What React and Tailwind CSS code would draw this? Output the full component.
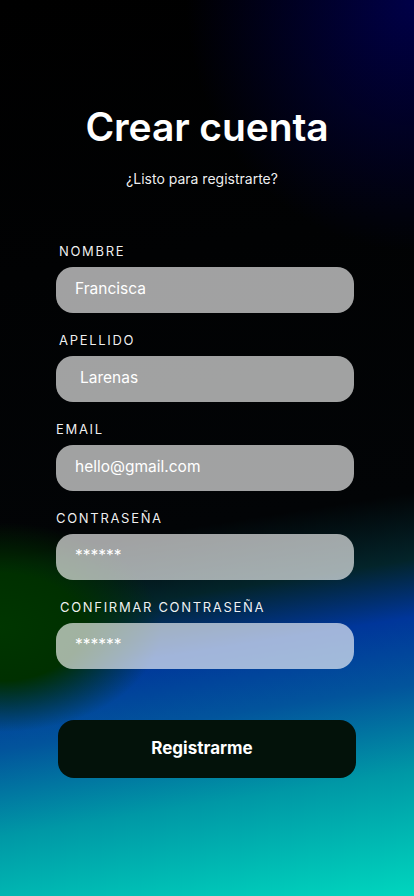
export default function App() {
  const fields = [
    { label: "NOMBRE", value: "Francisca", labelPad: "pl-[3px]", valuePad: "pl-[19px]" },
    { label: "APELLIDO", value: "Larenas", labelPad: "pl-[3px]", valuePad: "pl-[24px]" },
    { label: "EMAIL", value: "hello@gmail.com", labelPad: "pl-0", valuePad: "pl-[19px]" },
    { label: "CONTRASEÑA", value: "******", labelPad: "pl-0", valuePad: "pl-[19px]" },
    { label: "CONFIRMAR CONTRASEÑA", value: "******", labelPad: "pl-[4px]", valuePad: "pl-[19px]" },
  ];

  return (
    <div
      className="
      relative
      min-h-[896px]
      w-full
      overflow-hidden
      bg-[radial-gradient(ellipse_55%_28%_at_100%_0%,#000048_0%,transparent_100%),radial-gradient(ellipse_50%_15%_at_0%_70%,#003600_0%,#003000_40%,transparent_78%),linear-gradient(171deg,#000000_0%,#020406_58%,#03242a_65%,#00369a_71%,#02549c_78%,#0098a6_87%,#00d6be_100%)]
      font-['Inter','Noto_Sans',sans-serif]
      text-white
    "
    >
      {/* Header */}

      <div className="flex flex-col items-center pt-[103px]">
        <h1 className="text-[39px] font-semibold leading-[48px] tracking-[-0.1px]">
          Crear cuenta
        </h1>

        <p className="mr-[10px] mt-[18px] text-[14px] leading-[20px] text-white/95">
          ¿Listo para registrarte?
        </p>
      </div>

      {/* Form */}

      <div className="mt-[54px] flex flex-col gap-[19px] px-[56px]">
        {fields.map((field) => (
          <div key={field.label} className="flex flex-col gap-[8px]">
            <p
              className={`${field.labelPad} text-[13px] leading-[16px] tracking-[0.13em] text-white/95`}
            >
              {field.label}
            </p>

            <div
              className={`
              flex
              h-[46px]
              w-[298px]
              items-center
              rounded-[17px]
              bg-white/[0.63]
              ${field.valuePad}
              pb-[3px]
              text-[15.5px]
              text-white
            `}
            >
              {field.value}
            </div>
          </div>
        ))}
      </div>

      {/* Submit */}

      <div className="mt-[51px] px-[58px]">
        <button
          className="
          flex
          h-[58px]
          w-[298px]
          items-center
          justify-center
          rounded-[16px]
          bg-[#03120a]
          pr-[10px]
          text-[17px]
          font-bold
          text-white
        "
        >
          Registrarme
        </button>
      </div>
    </div>
  );
}
